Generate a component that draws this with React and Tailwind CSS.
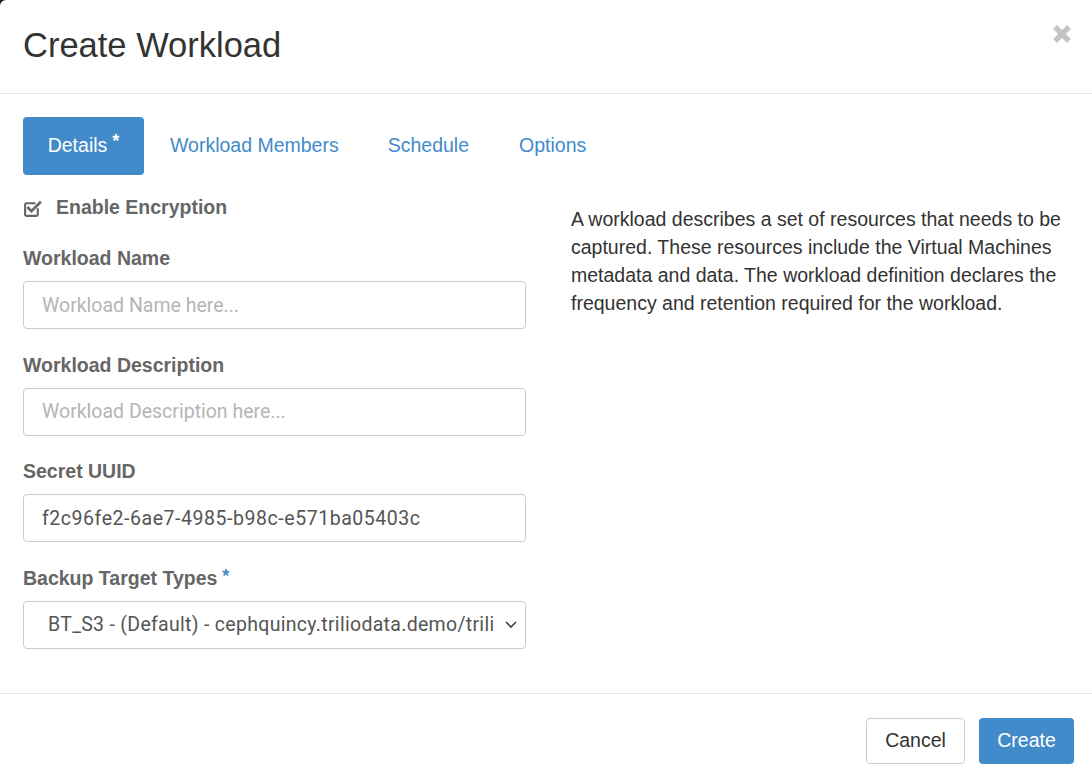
import React from "react";

const CheckSquare = () => (
	<svg viewBox="0 0 18 18" className="w-[19px] h-[19px]" fill="none" stroke="#666" strokeWidth={2}>
		<path d="M14 9.5V14.5a1.5 1.5 0 0 1-1.5 1.5h-9A1.5 1.5 0 0 1 2 14.5V5.5A1.5 1.5 0 0 1 3.5 4H11" strokeLinecap="round" />
		<path d="M5 8.5l3 3 8-8" strokeWidth={2.6} strokeLinecap="square" />
	</svg>
);

const Field = ({ label, children, required }) => (
	<div className="mb-[22.5px]">
		<div className="font-bold text-[#666] text-[19.5px] leading-[26px] mb-[10px]">
			{label}
			{required && <sup className="text-[#428bca] ml-[5px] text-[18px] relative top-[-3px]">*</sup>}
		</div>
		{children}
	</div>
);

const inputCls = "w-full h-[48px] border border-[#ccc] rounded-[4px] px-[18px] text-[19.5px] text-[#555] placeholder:text-[#b5b5b5] outline-none";

export default function App() {
	return (
		<div className="w-[1092px] h-[781px] bg-[#222]" style={{ fontFamily: '"Liberation Sans", Arial, sans-serif' }}>
			<div className="w-full h-full bg-white rounded-tl-[6px] flex flex-col">
				{/* header */}
				<div className="h-[94px] border-b border-[#e5e5e5] flex items-center justify-between pl-[23px] pr-[20px]">
					<h1 className="text-[34.5px] text-[#333] leading-none pb-[2px]">Create Workload</h1>
					<svg viewBox="0 0 20 20" className="w-[20px] h-[20px] mb-[26px]" stroke="#c4c4c4" strokeWidth={5.5} strokeLinecap="butt">
						<path d="M3 3l14 14M17 3L3 17" />
					</svg>
				</div>

				{/* tabs */}
				<div className="flex items-center px-[23px] pt-[23px]">
					<div className="h-[58px] w-[121px] bg-[#428bca] rounded-[4px] text-white text-[19.5px] flex items-center justify-center">
						Details<sup className="ml-[5px] text-[18px] relative top-[-5px] font-bold">*</sup>
					</div>
					<div className="text-[#428bca] text-[19.5px] ml-[26px]">Workload Members</div>
					<div className="text-[#428bca] text-[19.5px] ml-[49px]">Schedule</div>
					<div className="text-[#428bca] text-[19.5px] ml-[50px]">Options</div>
				</div>

				{/* body */}
				<div className="flex px-[23px] pt-[20px] flex-1">
					<div className="w-[503px]">
						<div className="flex items-center h-[26px] mb-[24px]">
							<CheckSquare />
							<span className="ml-[14px] font-bold text-[#666] text-[19.5px]">Enable Encryption</span>
						</div>
						<Field label="Workload Name">
							<input className={inputCls} style={{ fontFamily: "Roboto, sans-serif" }} placeholder="Workload Name here..." />
						</Field>
						<Field label="Workload Description">
							<input className={inputCls} style={{ fontFamily: "Roboto, sans-serif" }} placeholder="Workload Description here..." />
						</Field>
						<Field label="Secret UUID">
							<input className={inputCls + " tracking-[0.55px]"} style={{ fontFamily: "Roboto, sans-serif" }} defaultValue="f2c96fe2-6ae7-4985-b98c-e571ba05403c" />
						</Field>
						<Field label="Backup Target Types" required>
							<div className="w-full h-[48px] border border-[#ccc] rounded-[4px] pl-[24px] pr-[8px] flex items-center text-[19.5px] text-[#555] tracking-[0.3px]" style={{ fontFamily: "Roboto, sans-serif" }}>
								<span className="flex-1 overflow-hidden whitespace-nowrap">BT_S3 - (Default) - cephquincy.triliodata.demo/trilio</span>
								<svg viewBox="0 0 12 8" className="w-[12px] h-[8px] ml-[12px]" fill="none" stroke="#444" strokeWidth={1.6}>
									<path d="M1 1l5 5 5-5" />
								</svg>
							</div>
						</Field>
					</div>
					<div className="ml-[45px] flex-1 pt-[10px] text-[19.5px] leading-[28px] text-[#333]">
						A workload describes a set of resources that needs to be captured. These resources include the Virtual Machines metadata and data. The workload definition declares the frequency and retention required for the workload.
					</div>
				</div>

				{/* footer */}
				<div className="h-[88px] border-t border-[#e5e5e5] flex items-center justify-end pr-[18px] gap-[14px] pt-[6px]">
					<button className="h-[46px] w-[99px] border border-[#ccc] rounded-[4px] text-[19.5px] text-[#333] bg-white">Cancel</button>
					<button className="h-[46px] w-[95px] rounded-[4px] text-[19.5px] text-white bg-[#428bca]">Create</button>
				</div>
			</div>
		</div>
	);
}
